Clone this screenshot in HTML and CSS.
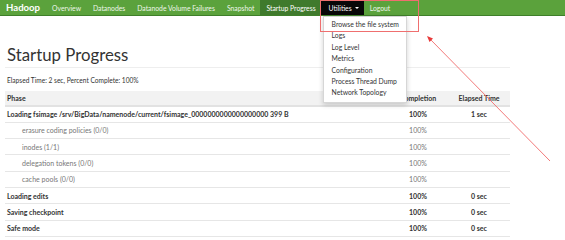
FILE: index.html
```
<!DOCTYPE html>
<html>
<head>
<meta charset="utf-8">
<link rel="stylesheet" href="styles.css">
</head>
<body>
<nav class="navbar">
  <span class="brand">Hadoop</span>
  <a class="nav-link">Overview</a>
  <a class="nav-link">Datanodes</a>
  <a class="nav-link">Datanode Volume Failures</a>
  <a class="nav-link">Snapshot</a>
  <a class="nav-link active">Startup Progress</a>
  <div class="dropdown">
    <a class="nav-link open">Utilities <span class="caret"></span></a>
    <ul class="dropdown-menu">
      <li>Browse the file system</li>
      <li>Logs</li>
      <li>Log Level</li>
      <li>Metrics</li>
      <li>Configuration</li>
      <li>Process Thread Dump</li>
      <li>Network Topology</li>
    </ul>
    <div class="highlight"></div>
  </div>
  <a class="nav-link">Logout</a>
</nav>
<main class="container">
  <h1 class="title">Startup Progress</h1>
  <p class="elapsed">Elapsed Time: 2 sec, Percent Complete: 100%</p>
  <table class="progress">
    <thead>
      <tr><th class="phase">Phase</th><th class="num">Completion</th><th class="num elapsed-col">Elapsed Time</th></tr>
    </thead>
    <tbody>
      <tr class="major"><td>Loading fsimage /srv/BigData/namenode/current/fsimage_0000000000000000000 399 B</td><td class="num">100%</td><td class="num">1 sec</td></tr>
      <tr class="step"><td class="sub">erasure coding policies (0/0)</td><td class="num">100%</td><td class="num"></td></tr>
      <tr class="step"><td class="sub">inodes (1/1)</td><td class="num">100%</td><td class="num"></td></tr>
      <tr class="step"><td class="sub">delegation tokens (0/0)</td><td class="num">100%</td><td class="num"></td></tr>
      <tr class="step"><td class="sub">cache pools (0/0)</td><td class="num">100%</td><td class="num"></td></tr>
      <tr class="major"><td>Loading edits</td><td class="num">100%</td><td class="num">0 sec</td></tr>
      <tr class="major"><td>Saving checkpoint</td><td class="num">100%</td><td class="num">0 sec</td></tr>
      <tr class="major"><td>Safe mode</td><td class="num">100%</td><td class="num">0 sec</td></tr>
    </tbody>
  </table>
</main>
<svg class="annotation" width="565" height="240" viewBox="0 0 565 240">
  <line x1="550" y1="161" x2="430" y2="39" stroke="#f06b6b" stroke-width="0.9"/>
  <polygon points="427,36 433,38.5 429.5,42" fill="#e83a3a"/>
</svg>
</body>
</html>
```
FILE: styles.css
```
* { box-sizing: border-box; }
html, body { margin: 0; padding: 0; }
body {
  width: 565px;
  height: 240px;
  overflow: hidden;
  background: #fff;
  font-family: Lato, "Liberation Sans", sans-serif;
  color: #333;
  position: relative;
}
.navbar {
  display: flex;
  align-items: stretch;
  height: 16px;
  background: #5ba23c;
  border-bottom: 1px solid #3f7f2a;
  padding-left: 0;
}
.brand {
  display: flex;
  align-items: center;
  padding: 0 6px 0 6px;
  color: #fff;
  font-size: 9.6px;
  font-weight: 700;
}
.nav-link {
  display: flex;
  align-items: center;
  padding: 0 6px;
  color: #eef6ea;
  font-size: 6.8px;
  white-space: nowrap;
}
.nav-link.active { background: #3f7a2c; color: #fff; padding: 0 5px 0 6px; }
.nav-link.open { background: #080808; color: #fff; padding: 0 5px 0 8px; height: 100%; }
.dropdown { position: relative; display: flex; }
.caret {
  display: inline-block;
  width: 0; height: 0;
  margin-left: 3px;
  border-left: 2px solid transparent;
  border-right: 2px solid transparent;
  border-top: 2px solid #fff;
}
.dropdown-menu {
  position: absolute;
  left: 2px;
  top: 16px;
  width: 84px;
  margin: 0;
  padding: 2px 0 3px;
  list-style: none;
  background: #fff;
  border: 1px solid #d6d6d6;
  box-shadow: 0 2px 5px rgba(0,0,0,0.18);
  z-index: 5;
}
.dropdown-menu li {
  height: 11.4px;
  line-height: 11.4px;
  padding-left: 8px;
  font-size: 6.8px;
  color: #333;
  white-space: nowrap;
}
.highlight {
  position: absolute;
  left: -1px;
  top: 0;
  width: 99px;
  height: 32px;
  border: 1px solid #ef6f6f;
  z-index: 6;
}
.container { padding: 0 55px 0 5px; }
.title {
  margin: 0;
  padding: 28px 0 0 2px;
  height: 52px;
  font-size: 16.8px;
  font-weight: 400;
  color: #333;
  border-bottom: 1px solid #eee;
}
.elapsed {
  margin: 0;
  padding: 8px 0 0 2px;
  height: 23px;
  font-size: 6.6px;
  color: #333;
}
.progress {
  width: 505px;
  border-collapse: collapse;
  font-size: 7px;
}
.progress th {
  background: #f2f2f2;
  height: 15px;
  border-bottom: 2px solid #e2e2e2;
  font-weight: 700;
  padding: 0 2px;
}
.progress td {
  height: 16.3px;
  padding: 0 2px;
  border-bottom: 1px solid #e6e6e6;
}
.phase { text-align: left; width: 383px; }
.num { text-align: center; width: 60px; }
.elapsed-col { width: 62px; }
.major td { font-weight: 700; color: #333; }
.step td { color: #777; }
.sub { padding-left: 17px !important; }
.annotation { position: absolute; left: 0; top: 0; pointer-events: none; z-index: 10; }
```
